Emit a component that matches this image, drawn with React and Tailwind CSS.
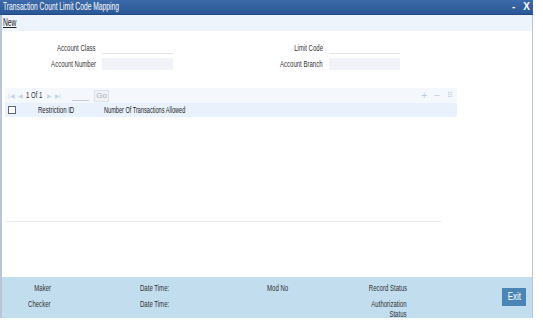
import React from "react";

const font = { fontFamily: '"Liberation Sans", Arial, sans-serif' };

// narrow text: the reference uses a condensed face
const T = ({ children, right, narrow, className = "" }) => (
  <span
    className={
      (right ? "origin-right " : "origin-left ") +
      (narrow ? "scale-x-[0.62] " : "scale-x-[0.67] ") +
      "inline-block whitespace-nowrap " +
      className
    }
  >
    {children}
  </span>
);

function Field({ label, filled }) {
  return (
    <div className="flex items-center h-[14px]">
      <div className="w-[94px] text-right text-[9px] text-[#333] leading-none">
        <T right>{label}</T>
      </div>
      <div
        className={
          filled
            ? "ml-[6px] w-[71px] h-[12px] bg-[#f1f3f9]"
            : "ml-[6px] w-[71px] h-[11px] bg-white border-b border-[#e3e6ec]"
        }
      />
    </div>
  );
}

const App = () => {
  return (
    <div className="w-[543px] h-[327px] bg-white overflow-hidden" style={font}>
      <div className="w-[533px] h-[318px] flex flex-col">
        {/* title bar */}
        <div className="h-[15px] flex items-center justify-between pl-[3px] pr-[3px] bg-gradient-to-b from-[#3c6aaa] to-[#2a5795] border-b border-[#214a85]">
          <span className="text-white text-[10px] leading-none">
            <T>Transaction Count Limit Code Mapping</T>
          </span>
          <div className="flex items-center gap-[8px] text-white text-[10px] font-bold leading-none">
            <span>-</span>
            <span>X</span>
          </div>
        </div>

        <div className="flex-1 flex flex-col border-l-2 border-r border-[#b8c6d6]">
          {/* toolbar */}
          <div className="h-[16px] bg-[#eef4fb] flex items-center pl-[1px]">
            <span className="text-[10px] text-[#222] leading-none">
              <T className="underline">New</T>
            </span>
          </div>

          {/* form */}
          <div className="flex pt-[10px] h-[57px]">
            <div className="flex flex-col gap-[2px]">
              <Field label="Account Class" />
              <Field label="Account Number" filled />
            </div>
            <div className="flex flex-col gap-[2px] ml-[56px]">
              <Field label="Limit Code" />
              <Field label="Account Branch" filled />
            </div>
          </div>

          {/* grid */}
          <div className="ml-[3px] w-[452px] flex flex-col">
            <div className="h-[15px] bg-[#f4f7fc] flex items-center pl-[3px] pr-[4px]">
              <div className="w-[62px] flex items-center gap-[3px] text-[6px] leading-none">
                <span className="text-[#c5d3e6]">|◀</span>
                <span className="text-[#c5d3e6]">◀</span>
                <span className="w-[18px] text-[#333] text-[9px]">
                  <T>1 Of 1</T>
                </span>
                <span className="text-[#c5d3e6]">▶</span>
                <span className="text-[#c5d3e6]">▶|</span>
              </div>
              <div className="ml-[2px] w-[17px] h-[10px] border-b border-[#c8ccd2]" />
              <div className="ml-[5px] w-[15px] h-[12px] flex items-center justify-center border border-[#dde2ea] bg-[#f0f2f5] text-[8px] text-[#a7b0bb] leading-none">
                Go
              </div>
              <div className="ml-auto flex items-center gap-[7px] text-[#b9cbe0] text-[10px] leading-none">
                <span>+</span>
                <span>−</span>
                <span className="text-[8px]">⠿</span>
              </div>
            </div>
            <div className="h-[14px] bg-[#e9f2fc] flex items-center pl-[3px] text-[9px] text-[#222] leading-none">
              <div className="w-[8px] h-[8px] border border-[#5a6678] bg-white" />
              <div className="ml-[22px] w-[66px]">
                <T>Restriction ID</T>
              </div>
              <T narrow>Number Of Transactions Allowed</T>
            </div>
            <div className="h-[105px] bg-white border-b border-[#e6ebf1] mr-[16px]" />
          </div>

          <div className="flex-1" />

          {/* footer */}
          <div className="h-[41px] bg-[#c1ddee] flex text-[9px] text-[#333] leading-none">
            <div className="w-[49px] flex flex-col items-end pt-[7px] gap-[7px]">
              <T right>Maker</T>
              <T right>Checker</T>
            </div>
            <div className="ml-[89px] w-[127px] flex flex-col pt-[7px] gap-[7px]">
              <T>Date Time:</T>
              <T>Date Time:</T>
            </div>
            <div className="w-[80px] pt-[7px]">
              <T>Mod No</T>
            </div>
            <div className="w-[60px] flex flex-col items-end pt-[7px]">
              <T right>Record Status</T>
              <div className="mt-[7px] flex flex-col items-end gap-[1px]">
                <T right>Authorization</T>
                <T right>Status</T>
              </div>
            </div>
            <div className="ml-auto mr-[6px] pt-[11px]">
              <div className="w-[24px] h-[18px] bg-[#4a85b5] text-white text-[10px] flex items-center justify-center">
                <span className="inline-block scale-x-[0.8] whitespace-nowrap">Exit</span>
              </div>
            </div>
          </div>
        </div>
      </div>
    </div>
  );
};

export default App;
